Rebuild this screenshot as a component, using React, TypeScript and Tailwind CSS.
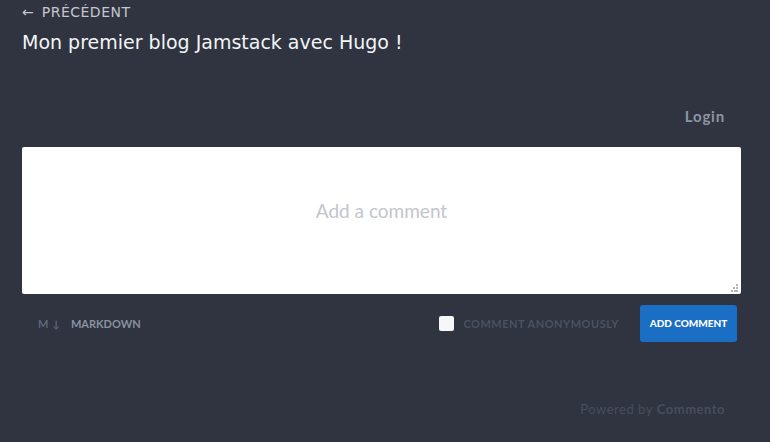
export default function App() {
  return (
    <div className="min-h-[442px] w-full bg-[#2f3440] px-[22px] pt-[3px]" style={{ fontFamily: '"DejaVu Sans", sans-serif' }}>
      <a className="flex items-center gap-[8px] text-[14px] uppercase leading-[18px] text-[#c3c7cf]">
        <span className="text-[14px]">←</span>
        <span className="tracking-[0.5px]">Précédent</span>
      </a>
      <h1 className="mt-[9px] text-[19px] font-medium leading-[24px] text-[#f2f4f7]">Mon premier blog Jamstack avec Hugo !</h1>

      <div className="mt-[52px] w-[719px]" style={{ fontFamily: '"Lato", "Open Sans", sans-serif' }}>
        <div className="flex justify-end pr-[16px] leading-[20px]">
          <span className="text-[15px] font-bold tracking-[0.8px] text-[#8d95a3]">Login</span>
        </div>
        <div className="relative mt-[21px] flex h-[147px] justify-center rounded-[2px] bg-white pt-[52px]">
          <span className="text-[19px] leading-[24px] text-[#c2c6cd]">Add a comment</span>
          <svg className="absolute bottom-[2px] right-[2px]" width="8" height="8" viewBox="0 0 8 8">
            <rect x="5" y="0" width="2" height="2" fill="#b5b5b5" />
            <rect x="2" y="3" width="2" height="2" fill="#b5b5b5" />
            <rect x="5" y="3" width="2" height="2" fill="#b5b5b5" />
            <rect x="0" y="6" width="2" height="2" fill="#b5b5b5" />
            <rect x="3" y="6" width="2" height="2" fill="#b5b5b5" />
            <rect x="5" y="6" width="2" height="2" fill="#b5b5b5" />
          </svg>
        </div>
        <div className="mt-[11px] flex items-center pr-[4px]">
          <div className="ml-[16px] flex items-center pt-[2px] text-[11px] font-bold">
            <span className="text-[#5d6678]">M</span>
            <span className="ml-[4px] text-[10px] text-[#5d6678]">↓</span>
            <span className="ml-[11px] text-[#8a92a0]">MARKDOWN</span>
          </div>
          <div className="ml-auto flex items-center">
            <span className="h-[15px] w-[15px] rounded-[2px] bg-[#f6f7f9]" />
            <span className="ml-[9px] pt-[2px] text-[11px] font-bold tracking-[0.5px] text-[#4a5263]">COMMENT ANONYMOUSLY</span>
            <button className="ml-[21px] flex h-[37px] w-[97px] items-center justify-center rounded-[3px] bg-[#1a6ec3] text-[10px] font-black text-white">
              ADD COMMENT
            </button>
          </div>
        </div>
        <div className="mt-[58px] flex justify-end pr-[16px] text-[13px] tracking-[0.5px] text-[#474e5c]">
          Powered by <span className="ml-[4px] font-bold">Commento</span>
        </div>
      </div>
    </div>
  );
}
